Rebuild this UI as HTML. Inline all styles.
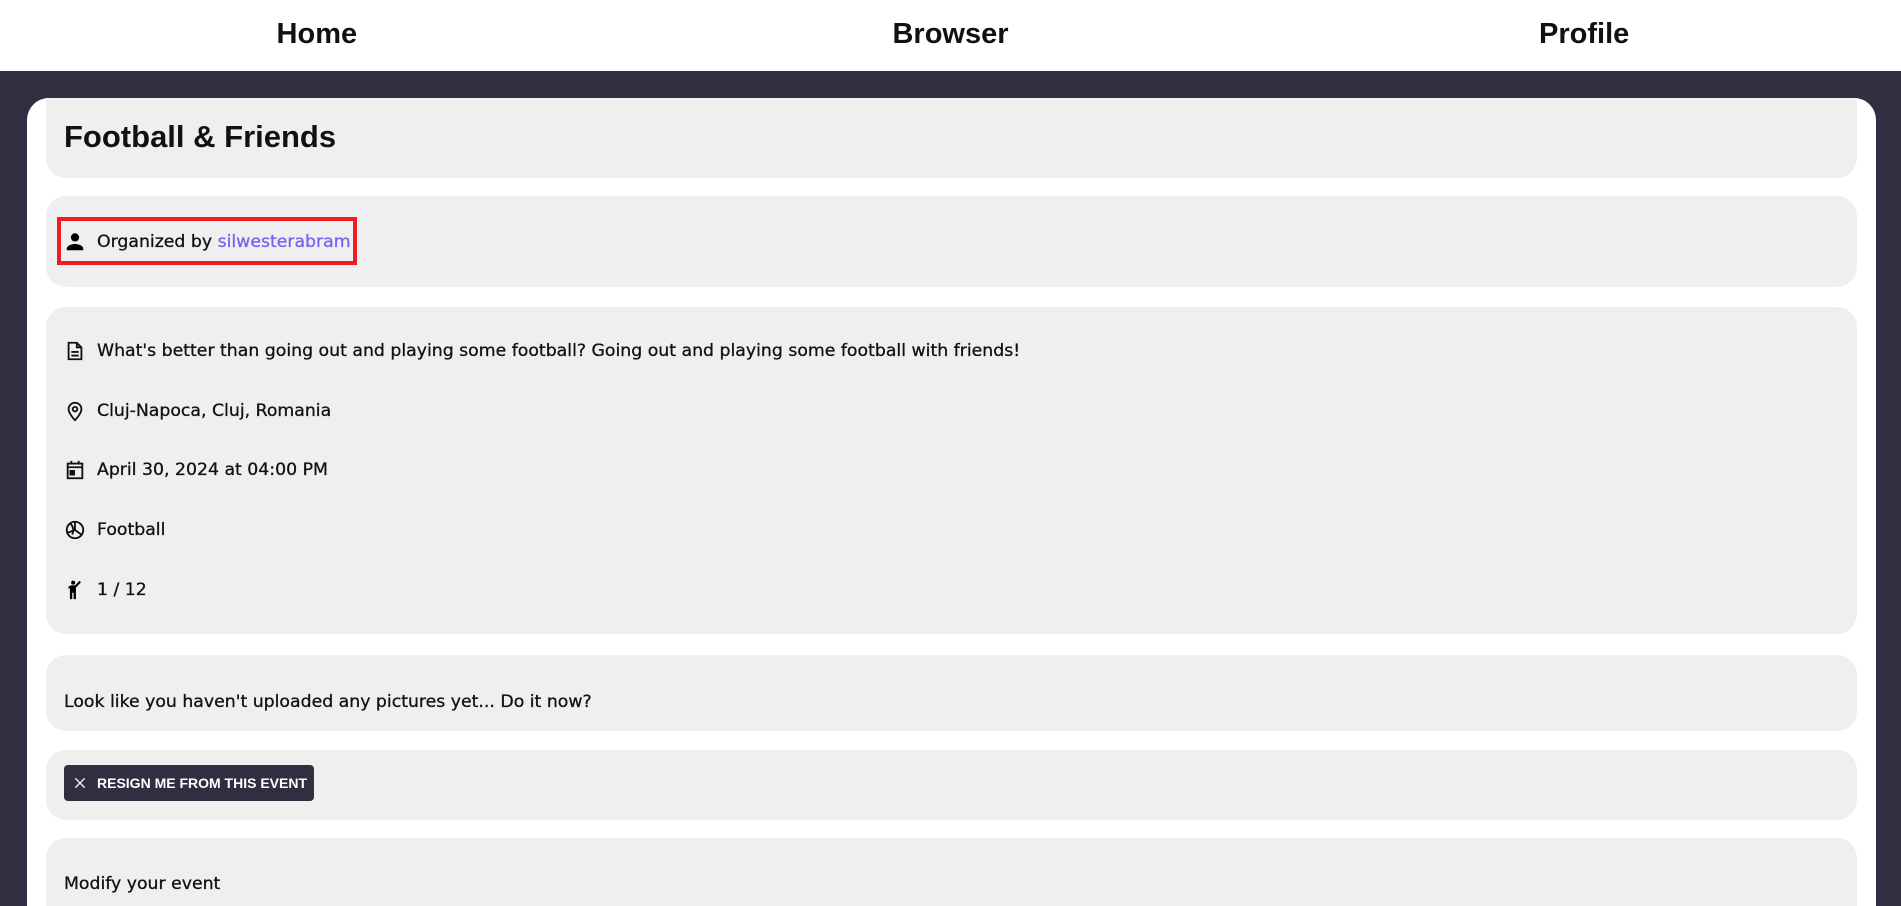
<!DOCTYPE html>
<html><head><meta charset="utf-8"><style>
*{box-sizing:border-box;margin:0;padding:0}
html,body{width:1901px;height:906px;overflow:hidden}
body{background:#302e41;font-family:"Liberation Sans","DejaVu Sans",sans-serif;color:#111;position:relative}
.hdr{position:absolute;left:0;top:0;width:1901px;height:71px;background:#fff;display:flex}
.hdr div{flex:1;text-align:center;font-weight:bold;font-size:29px;line-height:68px}
.card{position:absolute;left:27px;top:98px;width:1849px;height:808px;background:#fff;border-radius:22px 22px 0 0}
.sec{position:absolute;left:46px;width:1811px;background:#efefef;border-radius:20px}
.row{position:absolute;left:64px;font-family:"DejaVu Sans",sans-serif;font-size:17.3px;-webkit-text-stroke:0.3px #111;display:flex;align-items:center;height:24px;white-space:nowrap}
.row svg{width:22px;height:22px;margin-right:11px}
</style></head><body>
<div class="hdr"><div>Home</div><div>Browser</div><div>Profile</div></div>
<div class="card"></div>
<div class="sec" style="top:98px;height:80px;border-radius:0 0 20px 20px"></div>
<div style="position:absolute;left:64px;top:119px;font-size:31px;font-weight:bold">Football &amp; Friends</div>
<div class="sec" style="top:196px;height:91px"></div>
<div style="position:absolute;left:57px;top:217px;width:300px;height:48px;border:4px solid #ec1c24"></div>
<div class="row" style="top:230px"><svg viewBox="0 0 24 24"><circle cx="12" cy="7" r="4.5"/><path d="M3 21v-2c0-3 6-5 9-5s9 2 9 5v2z"/></svg>Organized by&nbsp;<span style="color:#7165f0;-webkit-text-stroke:0.3px #7165f0">silwesterabram</span></div>
<div class="sec" style="top:307px;height:327px"></div>
<div class="row" style="top:339px"><svg viewBox="0 0 24 24" fill="none" stroke="#111" stroke-width="2"><path d="M5 3h9l5 5v13H5z M14 3v5h5 M8 13h8 M8 17h8"/></svg>What's better than going out and playing some football? Going out and playing some football with friends!</div>
<div class="row" style="top:399px"><svg viewBox="0 0 24 24" fill="none" stroke="#111" stroke-width="2"><path d="M12 22s-7-7-7-12a7 7 0 0 1 14 0c0 5-7 12-7 12z"/><circle cx="12" cy="10" r="2.5"/></svg>Cluj-Napoca, Cluj, Romania</div>
<div class="row" style="top:458px"><svg viewBox="0 0 24 24" fill="none" stroke="#111" stroke-width="2"><rect x="4" y="5" width="16" height="16"/><path d="M4 9h16 M8 2v4 M16 2v4"/><rect x="7" y="13" width="4" height="4" fill="#111"/></svg>April 30, 2024 at 04:00 PM</div>
<div class="row" style="top:518px"><svg viewBox="0 0 24 24" fill="none" stroke="#111" stroke-width="2"><circle cx="12" cy="12" r="9"/><path d="M12 3v9l7 5 M12 12l-8 3 M7 5c3 3 4 7 2 12"/></svg>Football</div>
<div class="row" style="top:578px"><svg viewBox="0 0 24 24"><circle cx="10" cy="4" r="2.2"/><path d="M5 8l3-1h4l5-5 1.5 1.5-5.5 6V22h-2.5v-7h-1.5v7H6.5V10L5 11z"/></svg>1 / 12</div>
<div class="sec" style="top:655px;height:76px"></div>
<div class="row" style="top:690px">Look like you haven't uploaded any pictures yet... Do it now?</div>
<div class="sec" style="top:750px;height:70px"></div>
<div style="position:absolute;left:64px;top:765px;width:250px;height:36px;background:#302e41;border-radius:4px;color:#fff;font-size:14px;font-weight:bold;display:flex;align-items:center;padding-left:8px;white-space:nowrap"><svg viewBox="0 0 24 24" width="16" height="16" style="margin-right:9px" stroke="#fff" stroke-width="2"><path d="M5 5l14 14M19 5L5 19"/></svg>RESIGN ME FROM THIS EVENT</div>
<div class="sec" style="top:838px;height:100px"></div>
<div class="row" style="top:872px">Modify your event</div>
</body></html>
